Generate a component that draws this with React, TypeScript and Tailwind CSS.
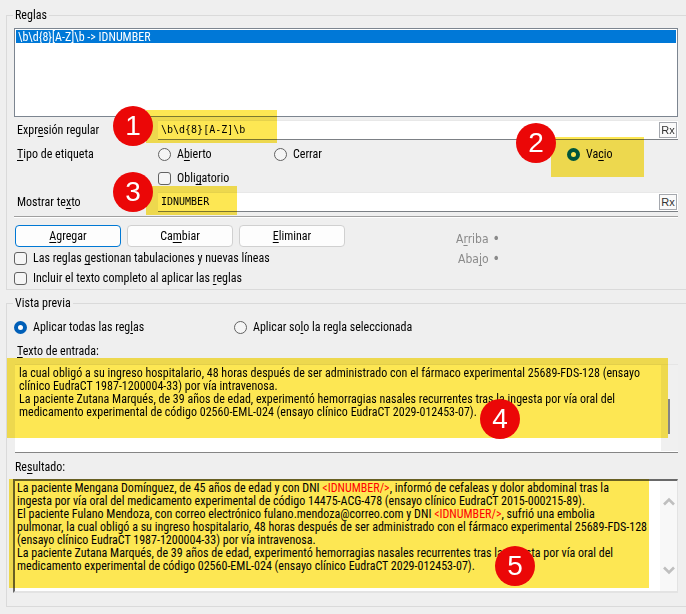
import { useState } from 'react';
import type { ReactNode } from 'react';


const inputText = `la cual obligó a su ingreso hospitalario, 48 horas después de ser administrado con el fármaco experimental 25689-FDS-128 (ensayo
clínico EudraCT 1987-1200004-33) por vía intravenosa.
La paciente Zutana Marqués, de 39 años de edad, experimentó hemorragias nasales recurrentes tras la ingesta por vía oral del
medicamento experimental de código 02560-EML-024 (ensayo clínico EudraCT 2029-012453-07).`;

const radioClass = "appearance-none shrink-0 w-[13px] h-[13px] rounded-full border border-[#626262] bg-[#f5f5f5] checked:border-4 checked:border-[#005fb8] checked:bg-white";
const checkClass = "appearance-none shrink-0 w-[13px] h-[13px] rounded-[3px] border border-[#626262] bg-[#f5f5f5] checked:bg-[#005fb8]";

// underlined access key
const Key = ({ children }: { children: ReactNode }) => (
    <span className="underline underline-offset-2 [text-decoration-skip-ink:none]">{children}</span>
)

const Mark = ({ className }: { className: string }) => (
    <div className={"absolute bg-[#fde753] mix-blend-multiply pointer-events-none " + className}></div>
)

const Step = ({ n, className }: { n: number, className: string }) => (
    <div className={"absolute flex items-center justify-center w-10 h-10 rounded-full bg-[#eb0707] font-['Liberation_Sans',Arial,sans-serif] text-white text-[28px] leading-10 pointer-events-none " + className}>{n}</div>
)

const Radio = ({ name, checked, children }: { name: string, checked?: boolean, children: ReactNode }) => (
    <label className="flex items-center gap-1.5">
        <input type="radio" name={name} defaultChecked={checked} className={radioClass} />
        <span>{children}</span>
    </label>
)

const Check = ({ className, children }: { className?: string, children: ReactNode }) => (
    <label className={"flex items-center gap-1.5 w-fit h-5 " + (className || '')}>
        <input type="checkbox" className={checkClass} />
        <span>{children}</span>
    </label>
)

const TextField = ({ id, value, onChange }: { id: string, value: string, onChange: (v: string) => void }) => (
    <div className="flex items-center h-5 bg-white border-t border-t-[#e8e8e8] border-b border-b-[#7c8085]">
        <input type="text" id={id} value={value} onChange={e => onChange(e.target.value)} className="flex-1 min-w-0 px-[3px] font-['DejaVu_Sans_Mono',monospace] text-[10px] leading-4 outline-none" />
        <button type="button" className="w-[18px] h-4 mr-px border border-[#a5a8ae] bg-[#fafafa] font-['Liberation_Sans',Arial,sans-serif] text-[11px] leading-3 text-[#333]">Rx</button>
    </div>
)


const App = () => {

    const [regex, setRegex] = useState('\\b\\d{8}[A-Z]\\b');
    const [label, setLabel] = useState('IDNUMBER');
    const [text, setText] = useState(inputText);

    return (
        <div className="min-h-screen bg-[#efefef] pl-1.5 pt-[7px] pb-2 overflow-hidden font-['Roboto_Condensed','Roboto',sans-serif] text-xs leading-4 text-black">
            <form onSubmit={e => e.preventDefault()}>

                <fieldset className="min-w-0 border-l border-y border-[#dadada] pl-[7px] pr-2 pb-px">
                    <legend className="px-0.5 -ml-px">Reglas</legend>

                    <ul className="h-[89px] mt-[5px] p-px border border-[#7c8590] bg-white">
                        <li className="h-[13px] px-0.5 leading-[14px] bg-[#0078d7] text-white">\b\d{'{8}'}[A-Z]\b -&gt; IDNUMBER</li>
                    </ul>

                    <div className="relative grid grid-cols-[144px_1fr] items-center mt-[3px]">
                        <label htmlFor="regex" className="pl-[3px]">Expr<Key>e</Key>sión regular</label>
                        <TextField id="regex" value={regex} onChange={setRegex} />
                        <Mark className="left-[132px] -top-[10px] w-[131px] h-[33px]" />
                        <Step n={1} className="left-[99px] -top-[14px]" />
                    </div>

                    <div className="relative grid grid-cols-[144px_116px_293px_1fr] items-center h-7">
                        <span className="pl-[3px]"><Key>T</Key>ipo de etiqueta</span>
                        <Radio name="tag">A<Key>b</Key>ierto</Radio>
                        <Radio name="tag">Cerrar</Radio>
                        <Radio name="tag" checked>Va<Key>c</Key>io</Radio>
                        <Mark className="left-[537px] -top-[3px] w-[93px] h-10" />
                        <Step n={2} className="left-[502px] -top-[17px]" />
                    </div>

                    <Check className="ml-36">Obli<Key>g</Key>atorio</Check>

                    <div className="relative grid grid-cols-[144px_1fr] items-center mt-1">
                        <label htmlFor="label" className="pl-[3px]">Mostrar te<Key>x</Key>to</label>
                        <TextField id="label" value={label} onChange={setLabel} />
                        <Mark className="left-[132px] -top-1.5 w-[91px] h-[29px]" />
                        <Step n={3} className="left-[99px] -top-5" />
                    </div>

                    <hr className="mt-1 h-0.5 border-t border-t-[#a0a0a0] border-b border-b-white" />

                    <div className="grid grid-cols-[332px_1fr] mt-[7px]">
                        <div>
                            <div className="flex gap-1.5 pl-px">
                                <button type="button" className="w-[106px] h-[22px] rounded border border-[#0078d4] bg-[#fdfdfd]"><Key>A</Key>gregar</button>
                                <button type="button" className="w-[106px] h-[22px] rounded border border-[#d0d0d0] bg-[#fdfdfd]">Ca<Key>m</Key>biar</button>
                                <button type="button" className="w-[106px] h-[22px] rounded border border-[#d0d0d0] bg-[#fdfdfd]"><Key>E</Key>liminar</button>
                            </div>
                            <Check className="mt-px">Las reglas <Key>g</Key>estionan tabulaciones y nuevas líneas</Check>
                            <Check>Incluir el texto completo al aplicar las <Key>r</Key>eglas</Check>
                        </div>
                        <div className="flex flex-col items-end w-[154px] pt-[3px] font-['DejaVu_Sans_Condensed','DejaVu_Sans',sans-serif] text-[#8a8a8a]">
                            <button type="button" disabled className="flex items-baseline gap-1 h-5"><span>A<Key>r</Key>riba</span><span className="text-sm">•</span></button>
                            <button type="button" disabled className="flex items-baseline gap-1 h-5"><span>Aba<Key>j</Key>o</span><span className="text-sm">•</span></button>
                        </div>
                    </div>
                </fieldset>

                <fieldset className="min-w-0 mt-[5px] border-l border-y border-[#dadada] pl-[7px] pr-2 pb-[13px]">
                    <legend className="px-0.5 -ml-px">Vista previa</legend>

                    <div className="grid grid-cols-[220px_1fr] mt-2">
                        <Radio name="scope" checked>Aplicar todas las reg<Key>l</Key>as</Radio>
                        <Radio name="scope">Aplicar so<Key>l</Key>o la regla seleccionada</Radio>
                    </div>

                    <label htmlFor="entrada" className="block mt-2 pl-[3px]"><Key>T</Key>exto de entrada:</label>
                    <div className="relative flex h-[89px] mt-[5px] ml-px border-t border-t-[#e5e5e5] border-b border-b-[#858585] bg-white">
                        <textarea id="entrada" value={text} onChange={e => setText(e.target.value)} className="flex-1 min-w-0 px-1 pt-0.5 resize-none outline-none overflow-hidden whitespace-pre leading-[13px]"></textarea>
                        <div className="w-[17px] mb-px pl-[7px] pt-[34px] bg-[#f0f0f0]">
                            <div className="w-0.5 h-[35px] bg-[#858585]"></div>
                        </div>
                        <Mark className="-left-2 -top-[7px] w-[calc(100%-2px)] h-20" />
                        <Step n={4} className="left-[465px] top-[34px]" />
                    </div>

                    <div id="resultado" className="mt-1.5 pl-px">Re<Key>s</Key>ultado:</div>
                    <div className="relative flex h-[114px] mt-1 -ml-px border-2 border-r border-t-[#696969] border-l-[#696969] border-r-[#e3e3e3] border-b-[#e3e3e3] bg-white">
                        <div aria-labelledby="resultado" role="textbox" aria-readonly="true" className="flex-1 min-w-0 px-0.5 pt-px whitespace-pre leading-[13px]">
                            <p>La paciente Mengana Domínguez, de 45 años de edad y con DNI <span className="text-[#f00]">&lt;IDNUMBER/&gt;</span>, informó de cefaleas y dolor abdominal tras la</p>
                            <p>ingesta por vía oral del medicamento experimental de código 14475-ACG-478 (ensayo clínico EudraCT 2015-000215-89).</p>
                            <p>El paciente Fulano Mendoza, con correo electrónico fulano.mendoza@correo.com y DNI <span className="text-[#f00]">&lt;IDNUMBER/&gt;</span>, sufrió una embolia</p>
                            <p>pulmonar, la cual obligó a su ingreso hospitalario, 48 horas después de ser administrado con el fármaco experimental 25689-FDS-128</p>
                            <p>(ensayo clínico EudraCT 1987-1200004-33) por vía intravenosa.</p>
                            <p>La paciente Zutana Marqués, de 39 años de edad, experimentó hemorragias nasales recurrentes tras la ingesta por vía oral del</p>
                            <p>medicamento experimental de código 02560-EML-024 (ensayo clínico EudraCT 2029-012453-07).</p>
                        </div>
                        <div className="flex flex-col justify-between items-center w-[17px] py-4 bg-[#f8f8f8]">
                            <svg width="12" height="9" viewBox="0 0 12 9" fill="none" stroke="#bfbfbf" strokeWidth="2.6"><path d="M1 7.5 6 2.5l5 5" /></svg>
                            <svg width="12" height="9" viewBox="0 0 12 9" fill="none" stroke="#bfbfbf" strokeWidth="2.6"><path d="M1 1.5l5 5 5-5" /></svg>
                        </div>
                        <Mark className="-left-1.5 -top-0.5 w-[calc(100%-22px)] h-[109px]" />
                        <Step n={5} className="left-[480px] top-[65px]" />
                    </div>
                </fieldset>

            </form>
        </div>
    );
}

export default App
